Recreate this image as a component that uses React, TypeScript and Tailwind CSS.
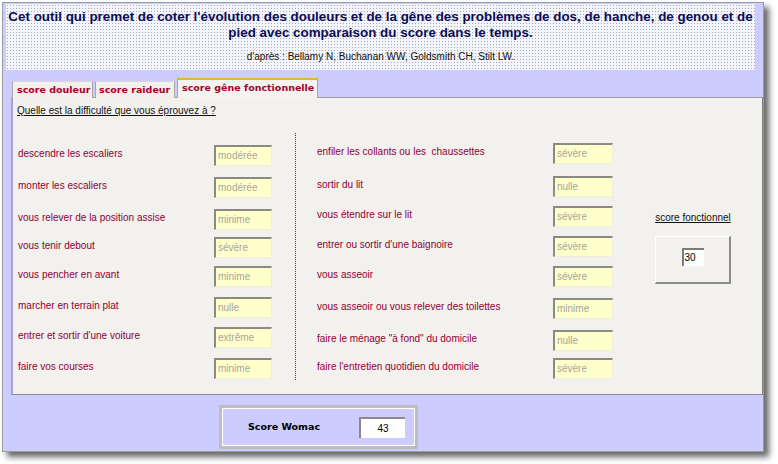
import React from "react";

const SANS = "font-['Liberation_Sans',Arial,sans-serif]";
const BOLD = "font-['DejaVu_Sans',Verdana,sans-serif] font-bold";

type Row = { l: string; v: string; h: string };

const left: Row[] = [
  { l: "descendre les escaliers", v: "modérée", h: "h-[32px]" },
  { l: "monter les escaliers", v: "modérée", h: "h-[32px]" },
  { l: "vous relever de la position assise", v: "minime", h: "h-[28px]" },
  { l: "vous tenir debout", v: "sévère", h: "h-[29px]" },
  { l: "vous pencher en avant", v: "minime", h: "h-[31px]" },
  { l: "marcher en terrain plat", v: "nulle", h: "h-[30px]" },
  { l: "entrer et sortir d'une voiture", v: "extrême", h: "h-[31px]" },
  { l: "faire vos courses", v: "minime", h: "h-[22px]" },
];

const right: Row[] = [
  { l: "enfiler les collants ou les  chaussettes", v: "sévère", h: "h-[33px]" },
  { l: "sortir du lit", v: "nulle", h: "h-[30px]" },
  { l: "vous étendre sur le lit", v: "sévère", h: "h-[30px]" },
  { l: "entrer ou sortir d'une baignoire", v: "sévère", h: "h-[30px]" },
  { l: "vous asseoir", v: "sévère", h: "h-[32px]" },
  { l: "vous asseoir ou vous relever des toilettes", v: "minime", h: "h-[32px]" },
  { l: "faire le ménage \"à fond\" du domicile", v: "nulle", h: "h-[28px]" },
  { l: "faire l'entretien quotidien du domicile", v: "sévère", h: "h-[22px]" },
];

function Field({ v, w }: { v: string; w: string }) {
  return (
    <div
      className={`h-[21px] ${w} shrink-0 bg-[#ffffcc] border-t-2 border-l-2 border-t-[#8a8a82] border-l-[#8a8a82] border-b border-r border-b-[#eeeedd] border-r-[#eeeedd] pl-[2px] text-[10px] leading-[18px] text-[#a6a69c] ${SANS}`}
    >
      {v}
    </div>
  );
}

function Column({ rows, labelW, inputW }: { rows: Row[]; labelW: string; inputW: string }) {
  return (
    <div className="flex flex-col">
      {rows.map((r) => (
        <div key={r.l} className={`flex items-start ${r.h}`}>
          <div className={`${labelW} shrink-0 whitespace-pre text-[10px] leading-[17px] text-[#900034] ${SANS}`}>{r.l}</div>
          <Field v={r.v} w={inputW} />
        </div>
      ))}
    </div>
  );
}

export default function App() {
  return (
    <div className="w-[778px] h-[464px] bg-white overflow-hidden pt-[2px] pl-[2px]">
      <div className="w-[762px] h-[450px] flex flex-col bg-[#ccccff] border border-[#9c9c9c] shadow-[5px_5px_6px_rgba(0,0,0,0.6)]">
        {/* header */}
        <div className="ml-[3px] mt-[1px] w-[749px] h-[66px] bg-[#f3f5fa] bg-[radial-gradient(circle,#a4a9ba_0.7px,transparent_0.9px)] bg-[length:3px_3px] flex flex-col items-center pt-[5px]">
          <div className={`text-center text-[13.4px] leading-[16px] font-bold text-[#0c0c58] whitespace-nowrap ${SANS}`}>
            Cet outil qui premet de coter l'évolution des douleurs et de la gêne des problèmes de dos, de hanche, de genou et de
            <br />
            pied avec comparaison du score dans le temps.
          </div>
          <div className={`mt-[9px] text-[10px] leading-[14px] text-[#111] ${SANS}`}>
            d'après : Bellamy N, Buchanan WW, Goldsmith CH, Stilt LW.
          </div>
        </div>

        {/* tabs */}
        <div className="ml-[9px] mt-[8px] h-[20px] flex items-end gap-[2px] relative z-10">
          <div className={`h-[17px] w-[81px] bg-[#f1f0eb] border border-b-0 border-[#a8a8a8] border-t-[#d8d8d8] text-[9.5px] leading-[16px] pl-[4px] text-[#a8002c] ${BOLD}`}>
            score douleur
          </div>
          <div className={`h-[17px] w-[80px] bg-[#f1f0eb] border border-b-0 border-[#a8a8a8] border-t-[#d8d8d8] text-[9.5px] leading-[16px] pl-[3px] text-[#a8002c] ${BOLD}`}>
            score raideur
          </div>
          <div className={`h-[20px] w-[141px] bg-[#f4f3ef] border-x border-[#a8a8a8] border-t-2 border-t-[#f0ae3c] text-[9.5px] leading-[16px] pl-[4px] text-[#a8002c] ${BOLD}`}>
            score gêne fonctionnelle
          </div>
        </div>

        {/* panel */}
        <div className="ml-[8px] -mt-[1px] w-[752px] h-[298px] bg-[#f2f1ed] border-t border-t-[#a0a0a0] border-l-2 border-l-[#a4a4d0] border-r border-r-[#7c7c7c] border-b border-b-[#8c8c8c]">
          <div className={`pt-[5px] pl-[4px] h-[21px] text-[10px] leading-[16px] ${SANS}`}>
            <span className="text-[#111] underline">
              Quelle est la difficulté que vous éprouvez à ?
            </span>
          </div>
          <div className="mt-[14px] flex">
            <div className="w-[282px] pl-[5px] pt-[12px]">
              <Column rows={left} labelW="w-[196px]" inputW="w-[58px]" />
            </div>
            <div className="w-0 h-[247px] border-l border-dotted border-[#444]" />
            <div className="pl-[21px] pt-[10px]">
              <Column rows={right} labelW="w-[236px]" inputW="w-[60px]" />
            </div>
            <div className="ml-[42px] w-[76px] pt-[77px] flex flex-col items-center">
              <span className={`text-[10px] leading-[16px] text-[#111] underline whitespace-nowrap ${SANS}`}>
                score fonctionnel
              </span>
              <div className="mt-[10px] w-[76px] h-[48px] border border-t-white border-l-white border-r-2 border-b-2 border-r-[#8a8a8a] border-b-[#8a8a8a] bg-[#f2f1ed] flex justify-center pt-[11px]">
                <div className={`w-[22px] h-[18px] bg-white border-t-2 border-l-2 border-t-[#7a7a7a] border-l-[#7a7a7a] text-[10px] leading-[15px] pl-[1px] text-black ${SANS}`}>
                  30
                </div>
              </div>
            </div>
          </div>
        </div>

        {/* score womac */}
        <div className="ml-[216px] mt-[10px] w-[199px] h-[44px] border-[3px] border-[#bdbdbd] outline outline-1 outline-white -outline-offset-4 bg-[#ccccff] flex items-center">
          <div className={`ml-[26px] text-[9.5px] text-black ${BOLD}`}>Score Womac</div>
          <div className={`ml-[39px] w-[46px] h-[21px] bg-white border-t-2 border-l-2 border-t-[#8a8a8a] border-l-[#8a8a8a] text-center text-[10px] leading-[19px] text-black ${SANS}`}>
            43
          </div>
        </div>
      </div>
    </div>
  );
}
